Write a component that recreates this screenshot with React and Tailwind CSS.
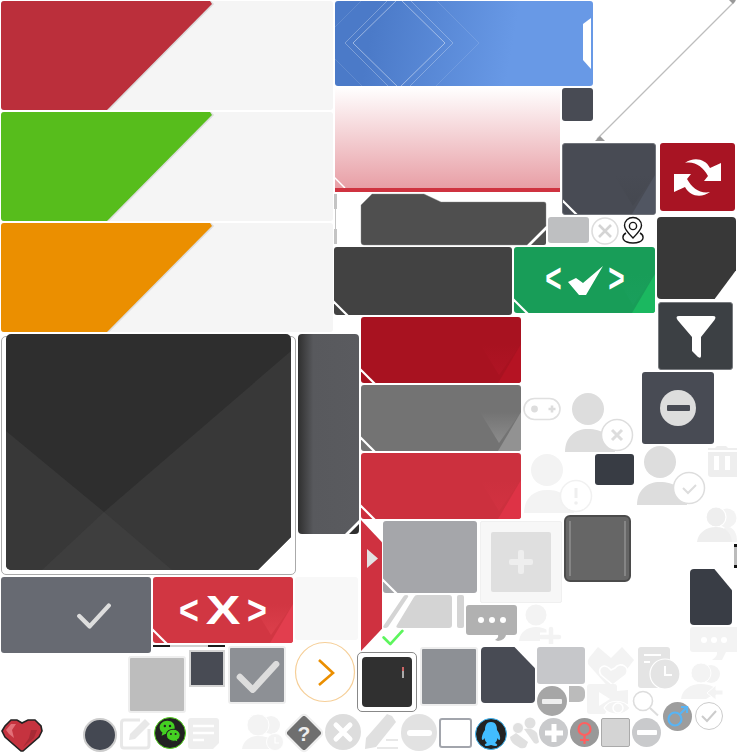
import React from 'react';

// everything inside a Shape is drawn in page coordinates, box = "x y w h"
const Shape = ({ cls, box, children }) => (
  <svg className={`absolute block ${cls}`} viewBox={box} fill="none">
    {children}
  </svg>
);

const Tile = ({ cls, w, h, facet, vee, slash = true, children }) => {
  const id = React.useId();
  return (
    <div className={`rounded-[3px] overflow-hidden ${cls}`}>
      <svg className="absolute inset-0 block" width={w} height={h} viewBox={`0 0 ${w} ${h}`}>
        <defs>
          <linearGradient id={id} x1="0" y1="0" x2="0" y2="1">
            <stop offset="0" stopColor={vee} stopOpacity="0" />
            <stop offset="1" stopColor={vee} />
          </linearGradient>
        </defs>
        {vee && <polygon points={`${w - 41},${h - 39} ${w - 22},${h - 8} ${w},${h - 39}`} fill={`url(#${id})`} />}
        {facet && <polygon points={`${w},${h - 39} ${w},${h} ${w - 23},${h}`} fill={facet} />}
        {slash && <line x1="-1" y1={h - 14} x2="14" y2={h + 1} stroke="#fff" strokeWidth="2.2" />}
      </svg>
      {children}
    </div>
  );
};

const Banner = ({ fill }) => (
  <div className="relative w-[332px] h-[109px] rounded-[3px] bg-[#f5f5f5] overflow-hidden">
    <svg className="absolute inset-0 block" width="332" height="109" viewBox="0 0 332 109">
      <polygon points="0,0 209,0 212,3 107,109 0,109" fill="#ddd" transform="translate(1.2 0)" />
      <polygon points="0,0 209,0 211,3 106,109 0,109" fill={fill} />
    </svg>
  </div>
);

const Person = ({ fill, cx, cy, bx, by, stroke, children }) => (
  <>
    <circle cx={cx} cy={cy} r="16" fill={fill} />
    <path d={`M${cx - 23} ${cy + 43} C${cx - 23} ${cy + 28} ${cx - 13} ${cy + 20} ${cx} ${cy + 20} C${cx + 14} ${cy + 20} ${cx + 24} ${cy + 26} ${cx + 27} ${cy + 43} Z`} fill={fill} />
    <circle cx={bx} cy={by} r="15.5" fill="#fff" stroke={stroke} strokeWidth="1.5" />
    {children}
  </>
);

const Circle = ({ cls, children }) => (
  <div className={`absolute rounded-full flex items-center justify-center ${cls}`}>{children}</div>
);

const Check = ({ cls, color = '#fff', width = 3 }) => (
  <svg className={`block ${cls}`} viewBox="0 0 40 30" fill="none">
    <path d="M3 15 L15 27 L37 3" stroke={color} strokeWidth={width} strokeLinecap="round" strokeLinejoin="round" />
  </svg>
);

const angle = "font-['Liberation_Sans',sans-serif] font-bold text-white text-[40px] leading-none flex items-center justify-center";

export default function App() {
  return (
    <div className="relative w-[737px] h-[753px] bg-white overflow-hidden">
      {/* big colour banners */}
      <div className="absolute left-[1px] top-[1px] flex flex-col gap-[2px]">
        <Banner fill="#bb2f3b" />
        <Banner fill="#57bd1c" />
        <Banner fill="#eb8f00" />
      </div>

      {/* blue header */}
      <div className="absolute left-[335px] top-[1px] w-[258px] h-[85px] rounded-[3px] overflow-hidden bg-[linear-gradient(100deg,#4b7ac8_15%,#6899e6_68%)]">
        <svg className="absolute inset-0 block" width="258" height="85" viewBox="335 1 258 85" fill="none">
          <polygon points="399,-2 445,43 399,88 353,43" stroke="#fff" strokeOpacity=".45" />
          <polygon points="399,-11 453,43 399,97 345,43" stroke="#fff" strokeOpacity=".28" />
          <polygon points="399,-37 479,43 399,123 319,43" stroke="#fff" strokeOpacity=".12" />
          <polygon points="583,24 591,18 591,69 583,60" fill="#fff" />
        </svg>
      </div>

      {/* pink fade */}
      <div className="absolute left-[335px] top-[87px] w-[225px] h-[105px] border-b-4 border-[#cf3340] bg-[linear-gradient(180deg,#fff,#e89fa6)]">
        <svg className="absolute left-0 bottom-0 block" width="12" height="12" viewBox="0 0 12 12">
          <line x1="-1" y1="1" x2="10" y2="12" stroke="#fff" strokeWidth="1.5" />
        </svg>
      </div>
      <div className="absolute left-[562px] top-[88px] w-[31px] h-[33px] rounded-[3px] bg-[#484b54]" />

      {/* long diagonal */}
      <Shape cls="left-[590px] top-0 w-[147px] h-[143px]" box="590 0 147 143">
        <line x1="735" y1="1" x2="597" y2="139" stroke="#bdbdbd" strokeWidth="1.2" />
        <polygon points="729,0 736,0 733,4" fill="#999" />
        <polygon points="595,141 605,141 600,136" fill="#999" />
      </Shape>

      <Tile cls="absolute left-[562px] top-[143px] w-[94px] h-[72px] bg-[#484b54] border border-[#70737a]" w={92} h={70} facet="#515662" vee="#454850" />

      {/* refresh */}
      <div className="absolute left-[660px] top-[143px] w-[75px] h-[68px] rounded-[3px] bg-[#a81423]">
        <svg className="absolute inset-0 block" width="75" height="68" viewBox="660 143 75 68">
          <g fill="#fff">
            <path d="M685 163 C693 157 705 158 710 168 L721 163 L721 181 L704 181 L708 176 C703 167 695 161 685 163Z" />
            <path transform="rotate(180 697.5 177.5)" d="M685 163 C693 157 705 158 710 168 L721 163 L721 181 L704 181 L708 176 C703 167 695 161 685 163Z" />
          </g>
        </svg>
      </div>

      {/* little scrollbar piece */}
      <div className="absolute left-[334px] top-[194px] w-[3px] h-[15px] bg-[#c4c4c4]" />
      <div className="absolute left-[335px] top-[209px] w-px h-[20px] bg-[#c4c4c4]" />
      <div className="absolute left-[334px] top-[229px] w-[3px] h-[15px] bg-[#c4c4c4]" />

      {/* folder */}
      <Shape cls="left-[360px] top-[193px] w-[188px] h-[53px]" box="360 193 188 53">
        <path d="M361 205 L372 194 L424 194 L441 202 L544 202 Q546 202 546 204 L546 226 L527 245 L364 245 Q361 245 361 242 Z" fill="#4f4f4f" stroke="#888" strokeWidth=".4" />
        <path d="M531 245 L546 230 L546 243 Q546 245 544 245 Z" fill="#4f4f4f" />
      </Shape>

      <div className="absolute left-[548px] top-[217px] w-[41px] h-[26px] rounded-[3px] bg-[#bebfc1]" />
      <Shape cls="left-[590px] top-[216px] w-[30px] h-[30px]" box="590 216 30 30">
        <circle cx="605" cy="231" r="13" stroke="#ddd" strokeWidth="1.6" />
        <path d="M599 225 L611 237 M611 225 L599 237" stroke="#d4d4d4" strokeWidth="2.6" />
      </Shape>
      <Shape cls="left-[620px] top-[216px] w-[26px] h-[30px]" box="620 216 26 30">
        <path d="M633 238 C628 233 624.5 229 624.5 225.5 C624.5 220.8 628.3 217.5 633 217.5 C637.7 217.5 641.5 220.8 641.5 225.5 C641.5 229 638 233 633 238Z" stroke="#151515" strokeWidth="1.4" />
        <circle cx="633" cy="226" r="3.6" stroke="#151515" strokeWidth="1.4" />
        <path d="M626 233 C622 235 621.5 240 627 242 C630 243.4 636 243.4 639 242 C644.5 240 644 235 640 233" stroke="#151515" strokeWidth="1.4" />
      </Shape>

      {/* dark corner */}
      <div className="absolute left-[657px] top-[217px] w-[79px] h-[82px] rounded-[4px] bg-[#383838] [clip-path:polygon(0_0,100%_0,100%_65%,73%_100%,0_100%)]" />

      <Tile cls="absolute left-[334px] top-[247px] w-[178px] h-[68px] bg-[#424242]" w={178} h={68} />

      {/* green confirm */}
      <Tile cls="absolute left-[514px] top-[247px] w-[141px] h-[66px] bg-[#189d58] flex items-center justify-center gap-[6px]" w={141} h={66} facet="#1bb860" vee="#1a9f5c">
        <span className={`relative -top-[2px] w-[15px] scale-x-[.7] ${angle}`}>&lt;</span>
        <svg className="relative block" width="36" height="30" viewBox="566 265 36 30">
          <polygon points="567,282 575,278 582,283 602,266 585,295 578,295" fill="#fff" />
        </svg>
        <span className={`relative -top-[2px] w-[15px] scale-x-[.7] ${angle}`}>&gt;</span>
      </Tile>

      {/* filter */}
      <div className="absolute left-[658px] top-[302px] w-[75px] h-[68px] rounded-[3px] bg-[#3c4044] border border-[#777a7e]">
        <svg className="absolute -left-px -top-px block" width="75" height="68" viewBox="658 302 75 68">
          <path d="M677.5 320 Q675 316 679 316 L713 316 Q717 316 714.5 320 L701 337 L701 356 Q701 359 698 357 L692 351 L692 337Z" fill="#fff" />
        </svg>
      </div>

      {/* minus tile */}
      <div className="absolute left-[642px] top-[372px] w-[72px] h-[72px] rounded-[3px] bg-[#484b54] flex items-center justify-center">
        <div className="w-[36px] h-[36px] rounded-full bg-[#ddd] flex items-center justify-center">
          <div className="w-[23px] h-[6px] rounded-[1px] bg-[#484b54]" />
        </div>
      </div>

      {/* big dark panel */}
      <div className="absolute left-[1px] top-[336px] w-[295px] h-[239px] rounded-[5px] border border-[#aaa]" />
      <div className="absolute left-[6px] top-[334px] w-[285px] h-[236px] rounded-[5px] overflow-hidden bg-[#2e2e2e] [clip-path:polygon(0_0,100%_0,100%_86%,88.4%_100%,0_100%)]">
        <svg className="absolute inset-0 block" width="285" height="236" viewBox="6 334 285 236">
          <polygon points="291,351 104,512 6,431 6,570 291,570" fill="#383838" />
          <polygon points="104,512 42,570 172,570" fill="#3e3e3e" />
        </svg>
      </div>

      {/* gray strip */}
      <div className="absolute left-[298px] top-[334px] w-[61px] h-[200px] rounded-[4px] overflow-hidden bg-[linear-gradient(90deg,#2f2f2f,#58595d_25%,#5a5b5f)]">
        <svg className="absolute inset-0 block" width="61" height="200" viewBox="298 334 61 200">
          <polygon points="345,534 359,520 359,534" fill="#fff" />
          <polygon points="349,534 359,524 359,534" fill="#2e2e2e" />
        </svg>
      </div>

      {/* gray check */}
      <div className="absolute left-[1px] top-[577px] w-[150px] h-[76px] rounded-[3px] bg-[#676a72]">
        <Check cls="absolute left-[75px] top-[26px] w-[36px] h-[26px]" color="#ddd" width={5} />
      </div>

      {/* red X */}
      <Tile cls="absolute left-[153px] top-[577px] w-[140px] h-[66px] bg-[#d13642] flex items-center justify-center gap-[7px]" w={140} h={66} facet="#e23e4e" vee="#dc3f4b">
        <span className={`relative w-[18px] scale-x-[.85] ${angle}`}>&lt;</span>
        <span className={`relative w-[36px] scale-x-[1.3] ${angle}`}>X</span>
        <span className={`relative w-[18px] scale-x-[.85] ${angle}`}>&gt;</span>
      </Tile>
      <div className="absolute left-[153px] top-[645px] w-[72px] h-[2px] flex">
        <div className="w-[17px] bg-[#1c1c1c]" />
        <div className="w-[38px] bg-[#d0d0d0]" />
        <div className="w-[17px] bg-[#1c1c1c]" />
      </div>
      <div className="absolute left-[295px] top-[577px] w-[63px] h-[63px] rounded-[3px] bg-[#f8f8f8]" />

      {/* stacked tiles */}
      <div className="absolute left-[361px] top-[317px] flex flex-col gap-[2px]">
        <Tile cls="relative w-[160px] h-[66px] bg-[#a81220]" w={160} h={66} facet="#b51323" vee="#b01424" />
        <Tile cls="relative w-[160px] h-[66px] bg-[#737373]" w={160} h={66} facet="#929292" vee="#8c8c8c" />
        <Tile cls="relative w-[160px] h-[66px] bg-[#cc303e]" w={160} h={66} facet="#de3346" vee="#d23241" />
      </div>

      {/* controller */}
      <Shape cls="left-[523px] top-[397px] w-[38px] h-[24px]" box="523 397 38 24">
        <rect x="524" y="398.5" width="36" height="21" rx="10.5" stroke="#e0e0e0" strokeWidth="1.6" />
        <circle cx="534.5" cy="409" r="3.4" fill="#ddd" />
        <path d="M548.5 409 H555.5 M552 405.5 V412.5" stroke="#ddd" strokeWidth="2.6" />
      </Shape>

      {/* people */}
      <Shape cls="left-[564px] top-[392px] w-[70px] h-[62px]" box="564 392 70 62">
        <Person fill="#ddd" cx={588} cy={409} bx={617} by={435} stroke="#ddd">
          <path d="M612 430 L622 440 M622 430 L612 440" stroke="#ddd" strokeWidth="3" />
        </Person>
      </Shape>
      <Shape cls="left-[523px] top-[452px] w-[70px] h-[62px]" box="523 452 70 62">
        <Person fill="#f3f3f3" cx={547} cy={470} bx={576} by={496} stroke="#f1f1f1">
          <path d="M576 488 V498" stroke="#efefef" strokeWidth="3" />
          <circle cx="576" cy="503" r="1.8" fill="#efefef" />
        </Person>
      </Shape>
      <Shape cls="left-[636px] top-[445px] w-[70px] h-[62px]" box="636 445 70 62">
        <Person fill="#ddd" cx={660} cy={462} bx={689} by={488} stroke="#ddd">
          <path d="M683 488 L688 493 L696 485" stroke="#ddd" strokeWidth="2" />
        </Person>
      </Shape>
      <div className="absolute left-[595px] top-[454px] w-[39px] h-[31px] rounded-[3px] bg-[#383c44]" />

      {/* trash */}
      <Shape cls="left-[707px] top-[444px] w-[30px] h-[34px]" box="707 444 30 34">
        <path d="M708 450 H737 V448 H728 L726 446 H717 L715 448 H708Z" fill="#eee" />
        <path d="M708 452 H737 V477 H711 Q708 477 708 474Z M714 456 V470 H719 V456Z M725 456 V470 H730 V456Z" fill="#eee" fillRule="evenodd" />
      </Shape>

      {/* two people */}
      <Shape cls="left-[696px] top-[506px] w-[41px] h-[37px]" box="696 506 41 37">
        <circle cx="727" cy="518" r="9.5" fill="#f3f3f3" />
        <path d="M725 526 C735 527 737 534 737 542 H720Z" fill="#f3f3f3" />
        <circle cx="716" cy="517" r="10" fill="#eee" stroke="#fff" strokeWidth="1.2" />
        <path d="M697 542 C698 533 706 527 716 527 C726 527 731 533 732 542Z" fill="#eee" />
      </Shape>

      {/* cap piece */}
      <div className="absolute left-[734px] top-[544px] w-[3px] h-[24px] bg-[#bbb] border-y-[3px] border-[#111]" />

      <div className="absolute left-[690px] top-[569px] w-[42px] h-[56px] rounded-[4px] bg-[#393d45] [clip-path:polygon(0_0,58%_0,100%_38%,100%_100%,0_100%)]" />

      <Shape cls="left-[690px] top-[626px] w-[47px] h-[36px]" box="690 626 47 36">
        <path d="M693 627 H737 V652 H726 L722 660 L712 660 Q718 656 717 652 H693 Q690 652 690 649 V630 Q690 627 693 627Z" fill="#f3f3f3" />
        <circle cx="704" cy="640" r="3" fill="#fff" />
        <circle cx="714" cy="640" r="3" fill="#fff" />
        <circle cx="724" cy="640" r="3" fill="#fff" />
      </Shape>

      {/* red side tab */}
      <div className="absolute left-[361px] top-[520px] w-[21px] h-[131px] bg-[#cf3140] [clip-path:polygon(0_0,100%_17%,100%_83%,0_100%)]">
        <div className="absolute left-[6px] top-[29px] w-[11px] h-[19px] bg-[#e2e2e2] [clip-path:polygon(0_0,100%_50%,0_100%)]" />
      </div>

      <Tile cls="absolute left-[383px] top-[521px] w-[94px] h-[72px] bg-[#a5a6aa]" w={94} h={72} />

      {/* add tile */}
      <div className="absolute left-[480px] top-[521px] w-[82px] h-[82px] rounded-[2px] bg-[#f7f7f7] border border-[#f0f0f0] flex items-center justify-center">
        <div className="relative w-[60px] h-[60px] rounded-[2px] bg-[#dfdfdf] flex items-center justify-center">
          <div className="absolute w-[24px] h-[6px] rounded-[2px] bg-[#eee]" />
          <div className="absolute w-[6px] h-[24px] rounded-[2px] bg-[#eee]" />
        </div>
      </div>

      {/* dark gray slot */}
      <div className="absolute left-[564px] top-[515px] w-[67px] h-[67px] rounded-[6px] bg-[#666] border-2 border-[#4b4b4b]">
        <div className="absolute left-[3px] top-[4px] w-[2px] h-[55px] bg-[#858585]" />
        <div className="absolute right-[3px] top-[4px] w-[2px] h-[55px] bg-[#858585]" />
      </div>

      {/* cut pieces */}
      <Shape cls="left-[382px] top-[594px] w-[84px] h-[36px]" box="382 594 84 36">
        <path d="M406 595 Q409 595 408 597 L388 627 Q387 628 385 628 Q382 628 384 625 L403 597 Q404 595 406 595Z" fill="#d4d4d4" />
        <path d="M417 595 H449 Q452 595 452 598 V625 Q452 628 449 628 H399 Q395 628 397 625 L414 597 Q415 595 417 595Z" fill="#d4d4d4" />
        <rect x="457" y="595" width="7" height="33" rx="2" fill="#d4d4d4" />
      </Shape>

      {/* chat gray */}
      <Shape cls="left-[465px] top-[604px] w-[53px] h-[38px]" box="465 604 53 38">
        <path d="M469 605 H514 Q517 605 517 608 V632 Q517 635 514 635 H506 Q505 640 498 641 L495 640 Q499 638 498 635 H469 Q466 635 466 632 V608 Q466 605 469 605Z" fill="#b1b1b1" />
        <circle cx="481" cy="620" r="3" fill="#fff" />
        <circle cx="492" cy="620" r="3" fill="#fff" />
        <circle cx="503" cy="620" r="3" fill="#fff" />
      </Shape>

      {/* green tick */}
      <Check cls="absolute left-[382px] top-[629px] w-[22px] h-[17px]" color="#5df55d" width={5} />

      {/* person plus */}
      <Shape cls="left-[518px] top-[604px] w-[44px] h-[40px]" box="518 604 44 40">
        <circle cx="536" cy="615" r="10.5" fill="#f3f3f3" />
        <path d="M519 641 C520 632 527 627 536 627 C546 627 552 632 553 641Z" fill="#f3f3f3" />
        <path d="M540 637 H560 M551 628 V645" stroke="#fff" strokeWidth="9" />
        <path d="M541 637 H559 M551 629 V644" stroke="#f3f3f3" strokeWidth="4.5" strokeLinecap="round" />
      </Shape>

      {/* square row */}
      <div className="absolute left-[128px] top-[656px] w-[58px] h-[57px] rounded-[3px] bg-[#bdbdbd] border-2 border-[#eee]" />
      <div className="absolute left-[189px] top-[650px] w-[36px] h-[37px] bg-[#484b54] border-2 border-[#d4d4d4]" />
      <div className="absolute left-[228px] top-[646px] w-[58px] h-[58px] rounded-[3px] bg-[#8d9095] border-2 border-[#eee]">
        <Check cls="absolute left-[6px] top-[13px] w-[44px] h-[32px]" color="#ddd" width={6} />
      </div>

      {/* next arrow */}
      <Shape cls="left-[294px] top-[641px] w-[62px] h-[62px]" box="294 641 62 62">
        <circle cx="325" cy="672" r="29.5" stroke="#f6cf98" strokeWidth="1.2" />
        <path d="M319 660 L333 673 L319 685" stroke="#eb8f00" strokeWidth="2.6" />
      </Shape>

      <div className="absolute left-[357px] top-[652px] w-[60px] h-[60px] rounded-[5px] border border-[#888] flex items-center justify-center">
        <div className="relative w-[50px] h-[50px] rounded-[4px] bg-[#303030]">
          <div className="absolute left-[40px] top-[10px] w-[2px] h-[11px] bg-[linear-gradient(180deg,#c66_35%,#aaa_35%)]" />
        </div>
      </div>
      <div className="absolute left-[420px] top-[647px] w-[58px] h-[59px] rounded-[3px] bg-[#8d9095] border-2 border-[#eee]" />
      <div className="absolute left-[481px] top-[647px] w-[54px] h-[56px] rounded-[4px] bg-[#484b54] [clip-path:polygon(0_0,62%_0,100%_38%,100%_100%,0_100%)]" />
      <div className="absolute left-[537px] top-[647px] w-[48px] h-[37px] rounded-[3px] bg-[#c6c7ca]" />
      <div className="absolute left-[569px] top-[686px] w-[16px] h-[16px] rounded-r-[6px] bg-[#bbb]" />
      <Circle cls="left-[537px] top-[686px] w-[30px] h-[30px] bg-[#a6a6a6]">
        <div className="w-[20px] h-[5px] rounded-[1px] bg-[#eee]" />
      </Circle>

      {/* hearts */}
      <Shape cls="left-[587px] top-[646px] w-[48px] h-[46px]" box="587 646 48 46">
        <path d="M598 647 L611 658 L622 647 L634 660 L611 690 L588 664 Q587 661 589 658Z" fill="#f3f3f3" />
        <path d="M611 670 C605 662 596 668 601 675 L613 685 L626 675 C631 667 620 661 615 668Z" fill="#f3f3f3" stroke="#fff" strokeWidth="1.6" />
      </Shape>

      {/* doc clock */}
      <Shape cls="left-[637px] top-[646px] w-[44px] h-[46px]" box="637 646 44 46">
        <path d="M641 647 H667 Q670 647 670 650 V665 L662 688 H641 Q638 688 638 685 V650 Q638 647 641 647Z" fill="#e4e4e4" />
        <path d="M644 655 H661 M644 662 H650" stroke="#fff" strokeWidth="2" />
        <circle cx="665" cy="674" r="15" fill="#e4e4e4" stroke="#fff" strokeWidth="1.2" />
        <path d="M665 666 V675 H672" stroke="#fff" strokeWidth="2" />
      </Shape>

      {/* people arrow */}
      <Shape cls="left-[680px] top-[661px] w-[46px] h-[41px]" box="680 661 46 41">
        <circle cx="711" cy="674" r="9" fill="#f3f3f3" />
        <circle cx="701" cy="673" r="10" fill="#f3f3f3" stroke="#fff" />
        <path d="M681 699 C682 690 690 684 701 684 C711 684 716 688 718 692 L706 699Z" fill="#f3f3f3" />
        <path d="M707 693 L716 685 V690 H723 V695 H716 V700Z" fill="#f3f3f3" stroke="#fff" />
      </Shape>

      {/* video eye */}
      <Shape cls="left-[586px] top-[683px] w-[46px] h-[34px]" box="586 683 46 34">
        <path d="M590 684 H614 Q617 684 617 687 V691 L628 690 V704 H610 L605 714 H590 Q587 714 587 711 V687 Q587 684 590 684Z" fill="#f3f3f3" />
        <path d="M599 692 L610 699 L599 706Z" fill="#fff" />
        <path d="M604 708 C609 699 624 699 630 708 C624 716 609 716 604 708Z" fill="#f3f3f3" stroke="#fff" strokeWidth="1.2" />
        <circle cx="618" cy="708" r="5" stroke="#fff" strokeWidth="1.5" />
      </Shape>

      {/* search */}
      <Shape cls="left-[632px] top-[690px] w-[28px] h-[28px]" box="632 690 28 28">
        <circle cx="643" cy="701" r="9.5" stroke="#ddd" strokeWidth="1.6" />
        <line x1="650" y1="708" x2="658" y2="715.5" stroke="#ddd" strokeWidth="2" />
      </Shape>

      {/* male */}
      <Circle cls="left-[663px] top-[702px] w-[29px] h-[29px] bg-[#9d9d9d]">
        <svg width="29" height="29" viewBox="0 0 29 29" fill="none">
          <circle cx="12" cy="17" r="6.5" stroke="#58b4f4" strokeWidth="2.2" />
          <path d="M17 12 L24 5 M18 5 H24 V11" stroke="#58b4f4" strokeWidth="2.2" />
        </svg>
      </Circle>
      <Circle cls="left-[695px] top-[702px] w-[28px] h-[28px] border-[1.5px] border-[#ccc]">
        <svg width="18" height="14" viewBox="0 0 18 14" fill="none">
          <path d="M2 7 L7 12 L16 2" stroke="#ccc" strokeWidth="2" />
        </svg>
      </Circle>

      {/* bottom row */}
      <Shape cls="left-[1px] top-[717px] w-[43px] h-[36px]" box="1 717 43 36">
        <path d="M2 731 L5 726 L11 720 L17 720 L22 723 L28 720 L35 720 L41 726 L42 731 L39 737 L23 751 L21 751 L5 737Z" fill="#c5333f" stroke="#222" strokeWidth="1.6" />
        <path d="M6 730 L11 724 L16 724 L12 730 L14 738 L9 734Z" fill="#e36f78" />
        <path d="M37 730 L34 738 L23 747 L29 738 L31 730Z" fill="#a72a35" />
      </Shape>

      <Circle cls="left-[83px] top-[718px] w-[34px] h-[34px] bg-[#444852] border-2 border-[#ccc]" />

      <Shape cls="left-[119px] top-[717px] w-[32px] h-[33px]" box="119 717 32 33">
        <path d="M140 720 H124 Q121.500 720 121.500 723 V745 Q121.500 748 124 748 H146 Q149 748 149 745 V729" stroke="#e8e8e8" strokeWidth="3" />
        <path d="M129 740 L130 734 L145 719 L150 724 L135 739Z" fill="#e8e8e8" />
      </Shape>

      <Circle cls="left-[154px] top-[717px] w-[32px] h-[32px] bg-[#222] border-[1.5px] border-[#56d620]">
        <svg width="32" height="32" viewBox="0 0 32 32">
          <path d="M5 10 C5 6 9 3 13 3 C18 3 21 6 21 10 C21 14 17 17 13 17 L11 17 L7 19 L8 15.500 C6 14 5 12 5 10Z" fill="#44d022" />
          <path d="M12 18 C12 14 16 12 19.500 12 C23.500 12 27 14.500 27 18 C27 20.500 26 22 24 23.500 L25 26 L21.500 24.500 C17 25.500 12 23 12 18Z" fill="#44d022" stroke="#222" strokeWidth="1.2" />
          <circle cx="10.500" cy="8.500" r="1.300" fill="#222" />
          <circle cx="16" cy="8.500" r="1.300" fill="#222" />
          <circle cx="17" cy="17" r="1.100" fill="#222" />
          <circle cx="22" cy="17" r="1.100" fill="#222" />
        </svg>
      </Circle>

      <Shape cls="left-[187px] top-[717px] w-[33px] h-[33px]" box="187 717 33 33">
        <path d="M191 718 H216 Q219 718 219 721 V743 L213 749 H191 Q188 749 188 746 V721 Q188 718 191 718Z" fill="#eee" />
        <path d="M193 726 H214 M193 733 H214 M193 740 H204" stroke="#fff" strokeWidth="2.4" />
      </Shape>

      <Shape cls="left-[241px] top-[713px] w-[44px] h-[40px]" box="241 713 44 40">
        <circle cx="271" cy="725" r="9" fill="#f3f3f3" />
        <circle cx="258" cy="725" r="11" fill="#f3f3f3" stroke="#fff" />
        <path d="M242 749 C243 741 250 736 258 736 C270 736 276 741 278 749Z" fill="#f3f3f3" />
        <circle cx="275" cy="742" r="8.500" fill="#f3f3f3" stroke="#fff" />
        <path d="M275 737 V743 H279" stroke="#fff" strokeWidth="1.2" />
      </Shape>

      {/* help diamond */}
      <div className="absolute left-[286px] top-[715px] w-[36px] h-[36px] flex items-center justify-center">
        <div className="absolute w-[26px] h-[26px] rotate-45 rounded-[3px] bg-[#6f6f6f] outline-2 outline-[#eee]" />
        <span className="relative font-['Liberation_Sans',sans-serif] font-bold text-[21px] leading-none text-[#eee]">?</span>
      </div>

      <Circle cls="left-[325px] top-[714px] w-[36px] h-[36px] bg-[#ddd]">
        <svg width="22" height="22" viewBox="0 0 22 22">
          <path d="M4 4 L18 18 M18 4 L4 18" stroke="#fff" strokeWidth="5" strokeLinecap="round" />
        </svg>
      </Circle>

      <Shape cls="left-[362px] top-[713px] w-[39px] h-[38px]" box="362 713 39 38">
        <path d="M387 714 L392 716 L396 722 L376 747 L365 749 L366 738Z" fill="#e0e0e0" />
        <path d="M386 740 H398 M377 748 H398" stroke="#e8e8e8" strokeWidth="2" />
      </Shape>

      <Circle cls="left-[401px] top-[714px] w-[36px] h-[37px] bg-[#e2e2e2]">
        <div className="w-[25px] h-[6px] rounded-[3px] bg-white" />
      </Circle>

      <div className="absolute left-[439px] top-[718px] w-[33px] h-[30px] rounded-[3px] border-2 border-[#a2a5ac] bg-white" />

      <Circle cls="left-[475px] top-[718px] w-[32px] h-[32px] bg-[#222] border-[1.5px] border-[#3fb7f5]">
        <svg width="22" height="26" viewBox="0 0 22 26">
          <path d="M11 1 C5.500 1 5 6 5 9 C2 13 1 18 2.500 19 C3.500 19 4 18 4.500 17 C5 20 6 21 7 22 C4 23 4 25 7 25 C9 25 10 24 11 24 C12 24 13 25 15 25 C18 25 18 23 15 22 C16 21 17 20 17.500 17 C18 18 18.500 19 19.500 19 C21 18 20 13 17 9 C17 6 16.500 1 11 1Z" fill="#42bdff" />
        </svg>
      </Circle>

      <Shape cls="left-[508px] top-[717px] w-[33px] h-[33px]" box="508 717 33 33">
        <circle cx="530" cy="723" r="5.500" fill="#e0e0e0" />
        <path d="M524 729 Q532 727 537 733 L539 742 Q537 745 534 743Z" fill="#e0e0e0" />
        <circle cx="518" cy="728" r="5.500" fill="#e0e0e0" stroke="#fff" />
        <path d="M510 737 L516 733 L528 742 L526 747 Q524 749 520 748 Q510 743 510 737Z" fill="#e0e0e0" />
      </Shape>

      <Circle cls="left-[539px] top-[718px] w-[29px] h-[29px] bg-[#c9cacc]">
        <svg width="22" height="22" viewBox="0 0 22 22">
          <path d="M2 11 H20 M11 2 V20" stroke="#fff" strokeWidth="5" />
        </svg>
      </Circle>

      <Circle cls="left-[570px] top-[718px] w-[29px] h-[29px] bg-[#999]">
        <svg width="29" height="29" viewBox="0 0 29 29" fill="none">
          <circle cx="14.500" cy="11" r="6" stroke="#ff6060" strokeWidth="2.200" />
          <path d="M14.500 17 V26 M10 22 H19" stroke="#ff6060" strokeWidth="2.200" />
        </svg>
      </Circle>

      <div className="absolute left-[601px] top-[718px] w-[29px] h-[29px] rounded-[2px] bg-[#d4d4d4] border border-[#aaa]" />

      <Circle cls="left-[632px] top-[718px] w-[29px] h-[29px] bg-[#c9cacc]">
        <div className="w-[20px] h-[5px] rounded-[1px] bg-white" />
      </Circle>
    </div>
  );
}
